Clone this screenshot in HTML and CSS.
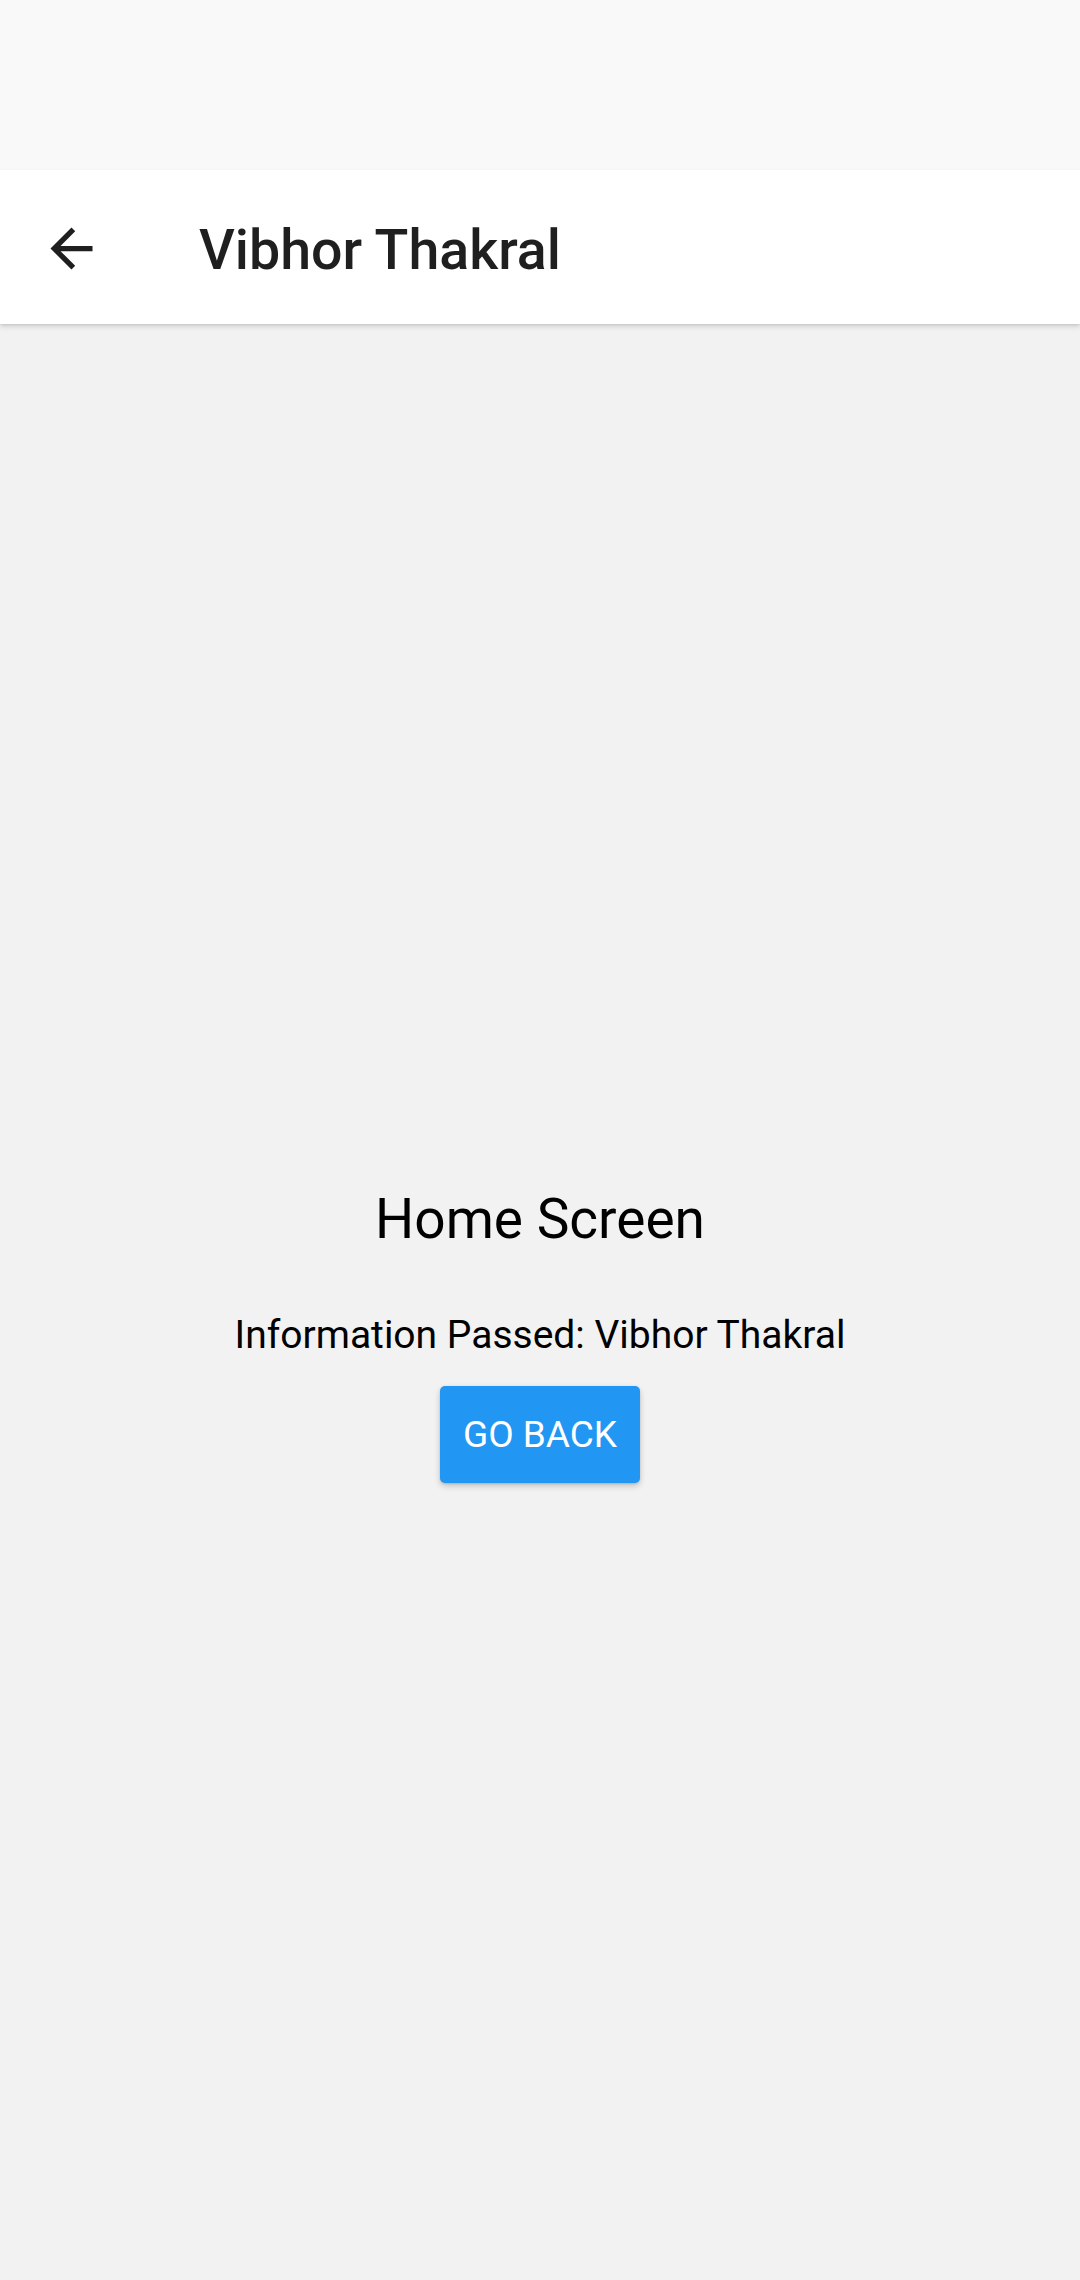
FILE: index.html
```html
<!DOCTYPE html>
<html>
<head>
<meta charset="utf-8">
<link rel="stylesheet" href="styles.css">
</head>
<body>
<div class="status-bar"></div>
<header class="app-bar">
  <div class="back-btn">
    <svg width="63" height="63" viewBox="0 0 24 24"><path d="M20 11H7.83l5.59-5.59L12 4l-8 8 8 8 1.41-1.41L7.83 13H20v-2z" fill="#1f1f1f"/></svg>
  </div>
  <h1 class="title">Vibhor Thakral</h1>
</header>
<main class="content">
  <div class="heading">Home Screen</div>
  <div class="info">Information Passed: Vibhor Thakral</div>
  <div class="button">GO BACK</div>
</main>
</body>
</html>
```
FILE: styles.css
```css
html, body {
  margin: 0;
  padding: 0;
}
body {
  width: 1080px;
  height: 2280px;
  background: #f2f2f2;
  font-family: Roboto, "Noto Sans", sans-serif;
  display: flex;
  flex-direction: column;
  overflow: hidden;
}
.status-bar {
  height: 170px;
  background: #f9f9f9;
  flex: none;
}
.app-bar {
  height: 154px;
  background: #ffffff;
  display: flex;
  align-items: center;
  flex: none;
  position: relative;
  z-index: 2;
  box-shadow: 0 3px 5px rgba(0,0,0,0.12), 0 1px 2px rgba(0,0,0,0.08);
}
.back-btn {
  width: 63px;
  height: 63px;
  margin-left: 40px;
  margin-top: 2px;
  display: flex;
}
.title {
  margin: 8px 0 0 96px;
  font-size: 55.5px;
  font-weight: 500;
  color: #1f1f1f;
  line-height: 64px;
}
.content {
  flex: 1;
  display: flex;
  flex-direction: column;
  align-items: center;
  justify-content: center;
  padding-top: 65px;
}
.heading {
  font-size: 55px;
  line-height: 64px;
  color: #000;
}
.info {
  margin-top: 61px;
  font-size: 39px;
  line-height: 46px;
  color: #000;
}
.button {
  margin-top: 28px;
  height: 97px;
  padding: 0 23px;
  box-sizing: border-box;
  background: #2196f3;
  color: #fff;
  border-radius: 5px;
  display: flex;
  align-items: center;
  justify-content: center;
  font-size: 37px;
  font-weight: 400;
  box-shadow: 0 3px 6px rgba(0,0,0,0.2), 0 1px 2px rgba(0,0,0,0.12);
}
```
